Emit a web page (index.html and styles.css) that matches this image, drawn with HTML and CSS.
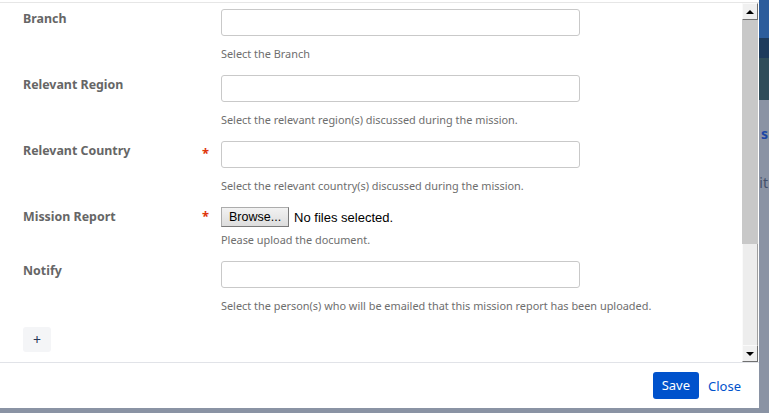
FILE: index.html
```html
<!DOCTYPE html>
<html>
<head>
<meta charset="utf-8">
<title>Upload Mission Report</title>
<link rel="stylesheet" href="styles.css">
</head>
<body>
<div class="screen">
  <div class="dialog">
    <div class="dialog-body">
      <div class="form">
        <div class="row">
          <div class="label">Branch</div>
          <div class="req"></div>
          <div class="field">
            <div class="input"></div>
            <div class="help">Select the Branch</div>
          </div>
        </div>
        <div class="row">
          <div class="label">Relevant Region</div>
          <div class="req"></div>
          <div class="field">
            <div class="input"></div>
            <div class="help">Select the relevant region(s) discussed during the mission.</div>
          </div>
        </div>
        <div class="row">
          <div class="label">Relevant Country</div>
          <div class="req">*</div>
          <div class="field">
            <div class="input"></div>
            <div class="help">Select the relevant country(s) discussed during the mission.</div>
          </div>
        </div>
        <div class="row">
          <div class="label">Mission Report</div>
          <div class="req req-file">*</div>
          <div class="field">
            <div class="file">
              <span class="browse">Browse...</span>
              <span class="file-name">No files selected.</span>
            </div>
            <div class="help help-file">Please upload the document.</div>
          </div>
        </div>
        <div class="row">
          <div class="label">Notify</div>
          <div class="req"></div>
          <div class="field">
            <div class="input"></div>
            <div class="help">Select the person(s) who will be emailed that this mission report has been uploaded.</div>
          </div>
        </div>
        <div class="add">+</div>
      </div>
      <div class="scrollbar">
        <div class="sb-btn"><span class="arrow-up"></span></div>
        <div class="sb-track"></div>
        <div class="sb-thumb"></div>
        <div class="sb-btn"><span class="arrow-down"></span></div>
      </div>
    </div>
    <div class="dialog-footer">
      <span class="btn-save">Save</span>
      <span class="btn-close">Close</span>
    </div>
  </div>
  <div class="backdrop">
    <div class="bd-blue"></div>
    <div class="bd-navy"></div>
    <div class="bd-teal"></div>
    <div class="bd-text bd-link">s</div>
    <div class="bd-text bd-dark">it</div>
  </div>
</div>
</body>
</html>
```

FILE: styles.css
```css
html, body { margin:0; padding:0; }
body { background:#8a93a4; font-family:"Noto Sans", "Open Sans", sans-serif; width:769px; height:413px; overflow:hidden; }

.screen { display:flex; height:408px; }

.dialog { width:759px; background:#fff; display:flex; flex-direction:column; }
.dialog-body { height:359px; margin-top:2px; border-top:1px solid #e6e6e6; display:flex; }

.form { flex:1; padding:6px 0 0 23px; }
.row { display:grid; grid-template-columns:179px 19px 500px; margin-bottom:14px; }
.label { font-size:12.4px; font-weight:bold; line-height:18px; padding-top:1px; color:#666; }
.req { color:#de350b; font-size:13px; font-weight:bold; line-height:18px; padding-top:3px; }
.req-file { padding-top:0; }
.input { width:357px; height:25px; border:1px solid #c9c9c9; border-radius:3px; }
.help { font-size:10.9px; line-height:14px; color:#6e6e6e; margin-top:11px; white-space:nowrap; }
.help-file { margin-top:6px; }

.file { display:flex; align-items:center; height:20px; }
.browse { font-family:"Liberation Sans", sans-serif; font-size:12.5px; color:#000; height:18px; line-height:18px; padding:0 7px; border:1px solid #acacac; border-right-color:#7a7a7a; border-bottom-color:#7a7a7a; background:linear-gradient(#f2f2f2,#dddddd); }
.file-name { font-family:"Liberation Sans", sans-serif; font-size:13px; color:#000; margin-left:5px; }

.add { width:28px; height:25px; line-height:25px; text-align:center; background:#f4f5f7; border-radius:3px; color:#253858; font-size:14px; }

.scrollbar { width:16px; margin-right:1px; display:flex; flex-direction:column; }
.sb-btn { height:15px; background:#f0f0f0; border:1px solid #fafafa; border-right-color:#707070; border-bottom-color:#707070; display:flex; align-items:center; justify-content:center; }
.sb-track { height:224px; background:#c8c8c8; }
.sb-thumb { flex:1; background:#ededed; border-left:1px solid #fafafa; border-right:1px solid #a0a0a0; }
.arrow-up { width:0; height:0; border-left:4px solid transparent; border-right:4px solid transparent; border-bottom:4px solid #000; }
.arrow-down { width:0; height:0; border-left:4px solid transparent; border-right:4px solid transparent; border-top:4px solid #000; }

.dialog-footer { flex:1; border-top:1px solid #e1e3e8; display:flex; justify-content:flex-end; align-items:center; gap:9px; padding-right:18px; }
.btn-save { background:#0052cc; color:#fff; font-size:13px; height:27px; line-height:27px; padding:0 9px; border-radius:3px; }
.btn-close { color:#0052cc; font-size:13px; }

.backdrop { flex:1; position:relative; overflow:hidden; }
.bd-blue { height:38px; background:#2c5d9c; }
.bd-navy { height:20px; background:#1d3b5c; }
.bd-teal { height:42px; background:#2f4d5a; }
.bd-text { position:absolute; right:1px; font-size:14px; }
.bd-link { top:124px; color:#1c47a6; font-weight:bold; }
.bd-dark { top:173px; color:#44506a; }
```
